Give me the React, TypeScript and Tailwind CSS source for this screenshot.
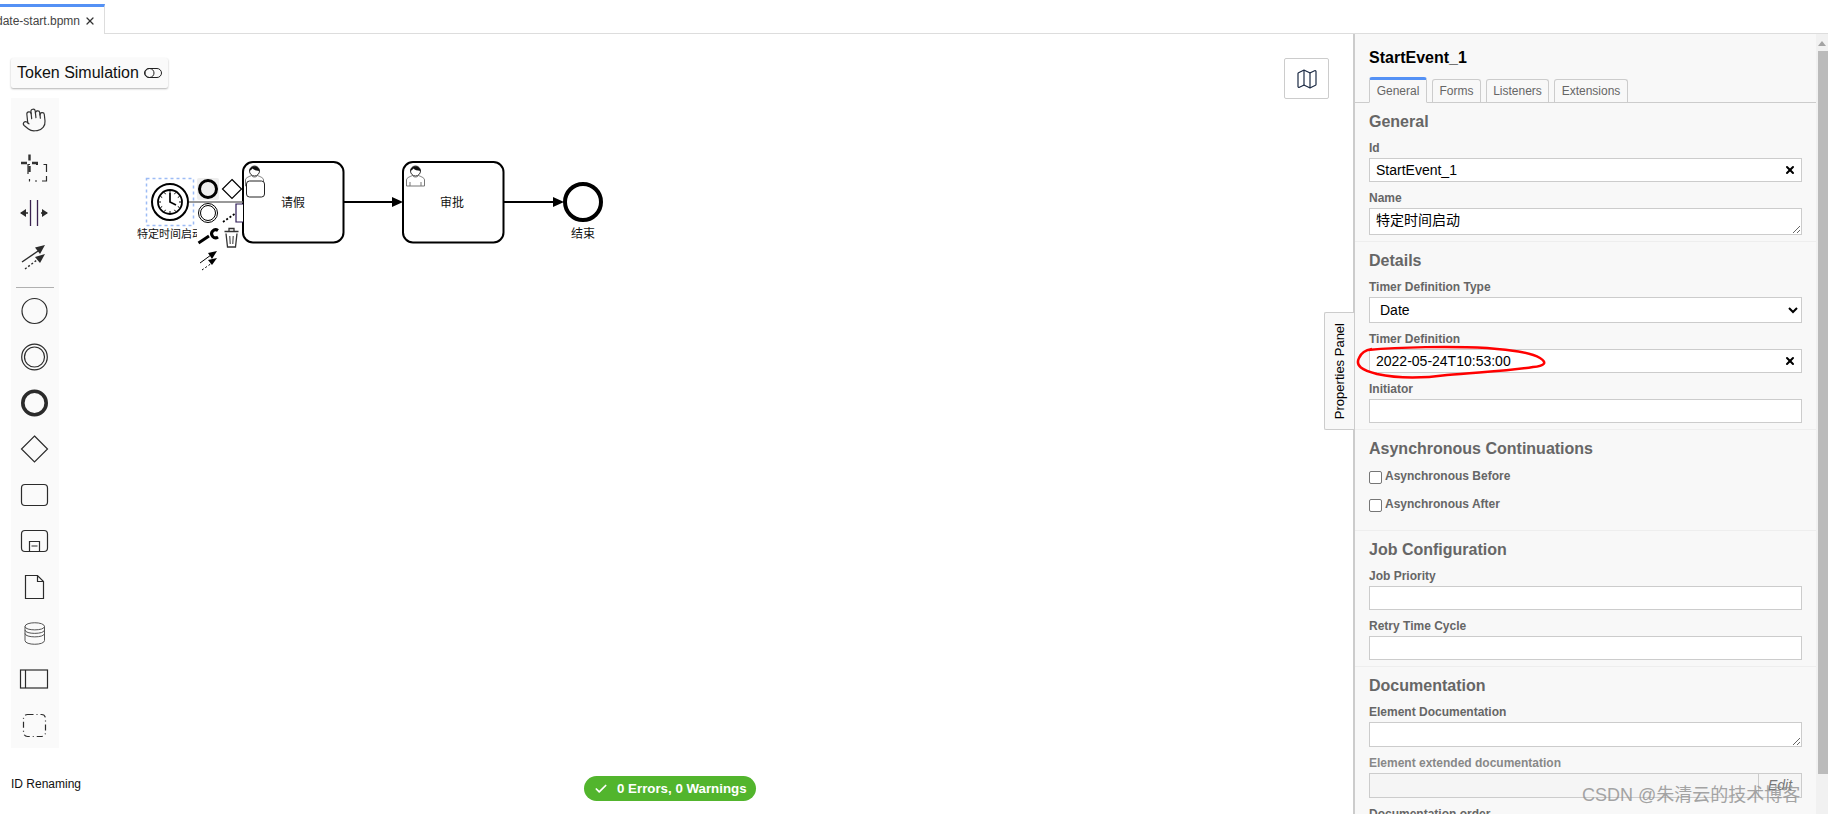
import React from 'react';
import { Check, Hand, Map as MapIcon, X } from 'lucide-react';

const fontStack = "font-['Liberation_Sans','Noto_Sans_CJK_SC',sans-serif]";

function Label({ children, muted }: { children: React.ReactNode; muted?: boolean }) {
  return (
    <div className={`mt-[8px] mb-[4px] h-[14px] text-[12px] leading-[16px] font-bold ${muted ? 'text-[#888]' : 'text-[#666]'}`}>
      {children}
    </div>
  );
}

function TextField({ label, value, clear }: { label: string; value?: string; clear?: boolean }) {
  return (
    <>
      <Label>{label}</Label>
      <div className="relative">
        <input
          readOnly
          value={value ?? ''}
          className="block h-[24px] w-full border border-[#ccc] bg-white px-[6px] text-[14px] text-black outline-none"
        />
        {clear && <X size={12} strokeWidth={4} className="absolute top-[6px] right-[6px] text-black" />}
      </div>
    </>
  );
}

function AreaField({ label, value, height }: { label: string; value?: string; height: string }) {
  return (
    <>
      <Label>{label}</Label>
      <textarea
        readOnly
        value={value ?? ''}
        className={`block w-full border border-[#ccc] bg-white px-[6px] py-[1px] text-[14px] leading-[20px] text-black outline-none ${height}`}
      />
    </>
  );
}

function Section({ title, children, last }: { title: string; children: React.ReactNode; last?: boolean }) {
  return (
    <section className={`px-[14px] pt-[8px] pb-[6px] ${last ? '' : 'border-b border-[#eee]'}`}>
      <h3 className="h-[21px] pt-[1px] text-[16px] leading-[20px] font-bold text-[#666]">{title}</h3>
      {children}
    </section>
  );
}

function CheckRow({ label }: { label: string }) {
  return (
    <label className="flex h-[13px] items-start gap-[3px] text-[12px] leading-[10px] font-bold text-[#666]">
      <input type="checkbox" readOnly className="m-0 h-[13px] w-[13px] appearance-none rounded-[2px] border border-[#767676] bg-white" />
      {label}
    </label>
  );
}

const TABS = [
  { name: 'General', width: 'w-[58px]', active: true },
  { name: 'Forms', width: 'w-[49px]' },
  { name: 'Listeners', width: 'w-[63px]' },
  { name: 'Extensions', width: 'w-[74px]' },
];

function PropertiesPanel() {
  return (
    <aside className="flex w-[475px] shrink-0 border-l-2 border-[#ccc] bg-[#f8f8f8]">
      <div className="h-[780px] flex-1 overflow-hidden">
        <div className="px-[14px] pt-[14px] text-[16px] leading-[20px] font-bold text-black">StartEvent_1</div>
        <div className="mt-[9px] flex h-[26px] gap-[5px] border-b border-[#ccc] pl-[14px]">
          {TABS.map((tab) => (
            <div
              key={tab.name}
              className={`flex items-center justify-center rounded-t-[3px] border border-[#ccc] text-[12px] text-[#666] ${tab.width} ${
                tab.active ? 'h-[26px] border-t-[3px] border-t-[#5491f5] border-b-[#f8f8f8] bg-[#f8f8f8]' : 'mt-[2px] h-[23px] border-b-0'
              }`}
            >
              {tab.name}
            </div>
          ))}
        </div>

        <Section title="General">
          <TextField label="Id" value="StartEvent_1" clear />
          <AreaField label="Name" value="特定时间启动" height="h-[27px]" />
        </Section>

        <Section title="Details">
          <Label>Timer Definition Type</Label>
          <select className="block h-[26px] w-full border border-[#ccc] bg-white pl-[6px] text-[14px] text-black outline-none">
            <option>Date</option>
          </select>
          <TextField label="Timer Definition" value="2022-05-24T10:53:00" clear />
          <TextField label="Initiator" />
        </Section>

        <Section title="Asynchronous Continuations">
          <div className="mt-[12px] flex flex-col gap-[15px] pb-[12px]">
            <CheckRow label="Asynchronous Before" />
            <CheckRow label="Asynchronous After" />
          </div>
        </Section>

        <Section title="Job Configuration">
          <TextField label="Job Priority" />
          <TextField label="Retry Time Cycle" />
        </Section>

        <Section title="Documentation" last>
          <AreaField label="Element Documentation" height="h-[25px]" />
          <Label muted>Element extended documentation</Label>
          <div className="flex h-[25px] border border-[#ccc] bg-[#f5f5f5]">
            <div className="flex-1" />
            <div className="flex w-[43px] items-center justify-center border-l border-[#ccc] text-[14px] text-[#777] italic">Edit</div>
          </div>
          <Label>Documentation order</Label>
        </Section>
      </div>

      <div className="relative w-[12px] shrink-0 bg-[#f1f1f1]">
        <div className="absolute top-[7px] left-[2px] h-0 w-0 border-x-[4px] border-b-[5px] border-x-transparent border-b-[#a3a3a3]" />
        <div className="absolute top-[17px] right-0 h-[723px] w-[10px] bg-[#bbb]" />
      </div>
    </aside>
  );
}

function PaletteIcon({ children }: { children: React.ReactNode }) {
  return (
    <div className="flex h-[46px] w-[48px] items-center justify-center">
      <svg width="48" height="46" viewBox="0 0 48 46" fill="none" stroke="#2b2b2b" strokeWidth="1.2">
        {children}
      </svg>
    </div>
  );
}

function Palette() {
  return (
    <div className="mt-[10px] flex w-[48px] flex-col bg-[#fafafa]">
      <div className="flex h-[46px] items-center justify-center pr-[2px] pb-[2px]">
        <Hand size={26} strokeWidth={1.1} className="-rotate-6 text-[#333]" />
      </div>
      <PaletteIcon>
        <path d="M18 19h6M29 19h6M26.500 10.500v6M26.500 22v6" stroke="#333" strokeWidth="2.400" transform="translate(-8 0)" />
        <path d="M19 20.500h-2v9.500M19 37h-.5v-2M24 37h2M31 37h4.500v-5M35.500 28v-7.500h-3" strokeWidth="1.200" />
        <path d="M27 20.500h-2" strokeWidth="1.200" />
      </PaletteIcon>
      <PaletteIcon>
        <path d="M19.500 10v26M26.500 10v26" stroke="#3b2350" strokeWidth="1.300" />
        <path d="M10 23h7M30 23h6" strokeWidth="1.600" />
        <path d="M9 23l6-4v8zM37 23l-6-4v8z" fill="#2b2b2b" stroke="none" />
      </PaletteIcon>
      <PaletteIcon>
        <path d="M11 26l19-13" strokeWidth="1.400" />
        <path d="M34 9l-10 2.500 5 6.500z" fill="#2b2b2b" stroke="none" />
        <path d="M14 33l16-12" strokeDasharray="2 2" strokeWidth="1.400" />
        <path d="M34 18l-10 3 5 6z" fill="#2b2b2b" stroke="none" />
      </PaletteIcon>
      <div className="mx-[5px] mt-[5px] border-t border-[#b0b0b0]" />
      <PaletteIcon><circle cx="23.500" cy="23" r="12.500" /></PaletteIcon>
      <PaletteIcon>
        <circle cx="23.500" cy="23" r="12.800" />
        <circle cx="23.500" cy="23" r="10" />
      </PaletteIcon>
      <PaletteIcon><circle cx="23.500" cy="23" r="11.700" strokeWidth="3.600" /></PaletteIcon>
      <PaletteIcon><path d="M23.500 10l13 13-13 13-13-13z" /></PaletteIcon>
      <PaletteIcon><rect x="10.500" y="12.500" width="26" height="21" rx="3.500" /></PaletteIcon>
      <PaletteIcon>
        <rect x="10.500" y="12.500" width="26" height="21" rx="3.500" />
        <path d="M18.500 33.500v-10h10v10M20.500 28h6" />
      </PaletteIcon>
      <PaletteIcon><path d="M14.500 11.500h12l6 6v17h-18zM26.500 11.500v6h6" /></PaletteIcon>
      <PaletteIcon>
        <g stroke="#555" strokeWidth="1">
          <path d="M14 16.500c0-5 19.500-5 19.500 0v14c0 5-19.500 5-19.500 0z" />
          <path d="M14 16.500c0 4.500 19.500 4.500 19.500 0M14 20c0 4.500 19.500 4.500 19.500 0M14 23.500c0 4.500 19.500 4.500 19.500 0" />
        </g>
      </PaletteIcon>
      <PaletteIcon>
        <rect x="9.500" y="14" width="27" height="18" />
        <path d="M14.500 14v18" />
      </PaletteIcon>
      <PaletteIcon>
        <rect x="12.500" y="12.500" width="22" height="22" rx="4" strokeDasharray="6 3 1 3" />
      </PaletteIcon>
    </div>
  );
}

function Person({ x, y }: { x: number; y: number }) {
  return (
    <g transform={`translate(${x} ${y})`} fill="none">
      <path d="M.5 21v-6c0-2.500 4-3.500 6-4.500M18.500 21v-6c0-2.500-4-3.500-6-4.500M.5 21h18M4 21v-4M15 21v-4M6.500 10.500c1 2 5 2 6 0" stroke="#777" strokeWidth="1" />
      <circle cx="9.500" cy="6" r="5" stroke="#333" strokeWidth="1" fill="#fff" />
      <path d="M4.500 6c0-6.500 10-6.500 10 0-3-.5-6-1-7-2.500-.8 1.200-2 2-3 2.500z" fill="#111" stroke="none" />
    </g>
  );
}

function Diagram() {
  const label = { fontSize: 12, fill: '#111', textAnchor: 'middle' as const };
  return (
    <svg className="absolute top-0 left-0" width="700" height="300" viewBox="0 34 700 300" fill="none" stroke="#000">
      <defs>
        <clipPath id="start-label">
          <rect x="130" y="222" width="67" height="20" />
        </clipPath>
      </defs>

      <rect x="243" y="162" width="100.500" height="80.500" rx="10" fill="#fff" strokeWidth="2" />
      <rect x="403" y="162" width="100.500" height="80.500" rx="10" fill="#fff" strokeWidth="2" />
      <path d="M189 202h54" stroke="#777" strokeWidth="1.500" />
      <path d="M344 202h50M504 202h50" strokeWidth="2" />
      <path d="M403 202l-11-5v10zM564 202l-11-5v10z" fill="#000" stroke="none" />

      <circle cx="583" cy="202" r="18" fill="#fff" strokeWidth="4" />
      <text x="293" y="207" stroke="none" {...label}>请假</text>
      <text x="452" y="207" stroke="none" {...label}>审批</text>
      <text x="583" y="238" stroke="none" {...label}>结束</text>

      <rect x="146.500" y="178.500" width="47" height="47" stroke="#9dbcf5" strokeWidth="1.500" strokeDasharray="3 3" />
      <circle cx="170" cy="202" r="18" fill="#fff" strokeWidth="2" />
      <circle cx="170" cy="202" r="12" strokeWidth="1.800" />
      <path d="M170 193v9l6 3" strokeWidth="1.700" />
      <path d="M170 191v2M170 211v2M159 202h2M179 202h2M164.500 192.500l1 1.700M175.500 192.500l-1 1.700M164.500 211.500l1-1.700M175.500 211.500l-1-1.700M160.500 196.500l1.700 1M160.500 207.500l1.700-1M179.500 196.500l-1.700 1M179.500 207.500l-1.700-1" strokeWidth="1" />
      <g clipPath="url(#start-label)">
        <text x="170" y="238" stroke="none" {...label} fontSize={11}>特定时间启动</text>
      </g>

      <Person x={245} y={165} />
      <rect x="246.500" y="181" width="18" height="16" rx="3" fill="#fff" strokeWidth="1" stroke="#222" />
      <Person x={406} y={165} />

      <rect x="197" y="178" width="22" height="22" rx="2" fill="#eee" stroke="none" />
      <circle cx="208" cy="189" r="8.500" fill="none" strokeWidth="3" />
      <path d="M232 179.500l9.500 9.500-9.500 9.500-9.500-9.500z" fill="#fff" strokeWidth="1.200" />
      <circle cx="208" cy="213" r="9.500" fill="#fff" strokeWidth="1" />
      <circle cx="208" cy="213" r="7.500" strokeWidth="1" />
      <path d="M223 222l13-9" strokeWidth="1.800" strokeDasharray="2 2" />
      <path d="M243 204h-7v18h7" fill="#fff" stroke="#2c1a55" strokeWidth="1.200" />
      <path d="M198.500 243l10.500-7" strokeWidth="3" />
      <path d="M218 230.500a4 4 0 1 0 0 6.500" strokeWidth="3" />
      <g stroke="#333">
        <path d="M224.500 231.500h14M229 231v-2.500h5v2.500M226 233.500l1.500 13.500h8l1.500-13.500" strokeWidth="1.300" />
        <path d="M229.800 236l.4 8M233.200 236l-.4 8" strokeWidth="1" />
      </g>
      <path d="M200 263l11-8" strokeWidth="1" />
      <path d="M217 251l-9 2 4 6z" fill="#000" stroke="none" />
      <path d="M202 270l10-7" strokeDasharray="2 2" strokeWidth="1" />
      <path d="M217 258l-9 2 4 5z" fill="#000" stroke="none" />
    </svg>
  );
}

export default function App() {
  return (
    <div className={`flex h-[814px] w-[1828px] flex-col overflow-hidden bg-white ${fontStack}`}>
      <div className="flex h-[34px] shrink-0 items-end border-b border-[#ddd] bg-white">
        <div className="-mb-px flex h-[30px] w-[105px] items-center justify-end gap-[4px] overflow-hidden border-t-[3px] border-r border-t-[#5491f5] border-r-[#ddd] bg-white pr-[8px] whitespace-nowrap">
          <span className="text-[12px] text-[#444]">date-start.bpmn</span>
          <X size={12} strokeWidth={2.5} className="shrink-0 text-[#333]" />
        </div>
      </div>

      <div className="flex min-h-0 flex-1">
        <main className="relative flex-1">
          <Diagram />
          <div className="relative flex flex-col items-start pt-[24px] pl-[11px]">
            <div className="flex h-[30px] w-[157px] items-center gap-[5px] rounded-[2px] bg-[#fafafa] pl-[6px] text-[16px] text-[#111] shadow-[0_1px_2px_rgba(0,0,0,0.3)]">
              <span>Token Simulation</span>
              <svg width="18" height="12" viewBox="0 0 18 12" fill="none" stroke="#222" strokeWidth="1">
                <rect x="0.500" y="1.500" width="17" height="9" rx="4.500" />
                <circle cx="5.500" cy="6" r="4.500" />
              </svg>
            </div>
            <Palette />
            <div className="mt-[29px] text-[12px] leading-[14px] text-[#111]">ID Renaming</div>
          </div>

          <button className="absolute top-[24px] right-[24px] flex h-[41px] w-[45px] items-center justify-center rounded-[2px] border border-[#ccc] bg-white">
            <MapIcon size={24} strokeWidth={1.2} className="text-[#1c2a44]" />
          </button>

          <div className="absolute top-[742px] left-[584px] flex h-[25px] w-[172px] items-center gap-[9px] rounded-full bg-[#52b52d] pl-[10px] text-[13.3px] font-bold text-white">
            <Check size={14} strokeWidth={3} />
            <span>0 Errors, 0 Warnings</span>
          </div>

          <div className="absolute top-[278px] -right-px z-10 flex h-[118px] w-[30px] items-center justify-center rounded-l-[2px] border border-r-0 border-[#ccc] bg-[#f8f8f8]">
            <span className="rotate-180 text-[13px] whitespace-nowrap text-black [writing-mode:vertical-rl]">Properties Panel</span>
          </div>
        </main>

        <PropertiesPanel />
      </div>

      <svg className="pointer-events-none absolute top-0 left-0" width="1828" height="814" fill="none">
        <path
          d="M1368 350C1400 347 1450 346 1487 348C1510 350 1530 352 1540 358C1548 363 1544 366 1533 367C1510 371 1480 372 1447 375C1425 378 1400 379 1377 374C1362 370 1355 366 1359 358C1361 353 1366 350 1372 349"
          stroke="#f00"
          strokeWidth="2.500"
        />
      </svg>

      <div className="pointer-events-none absolute top-[783px] left-[1582px] text-[18px] leading-[24px] whitespace-nowrap text-[#8f8f8f] opacity-80">
        CSDN @朱清云的技术博客
      </div>
    </div>
  );
}
